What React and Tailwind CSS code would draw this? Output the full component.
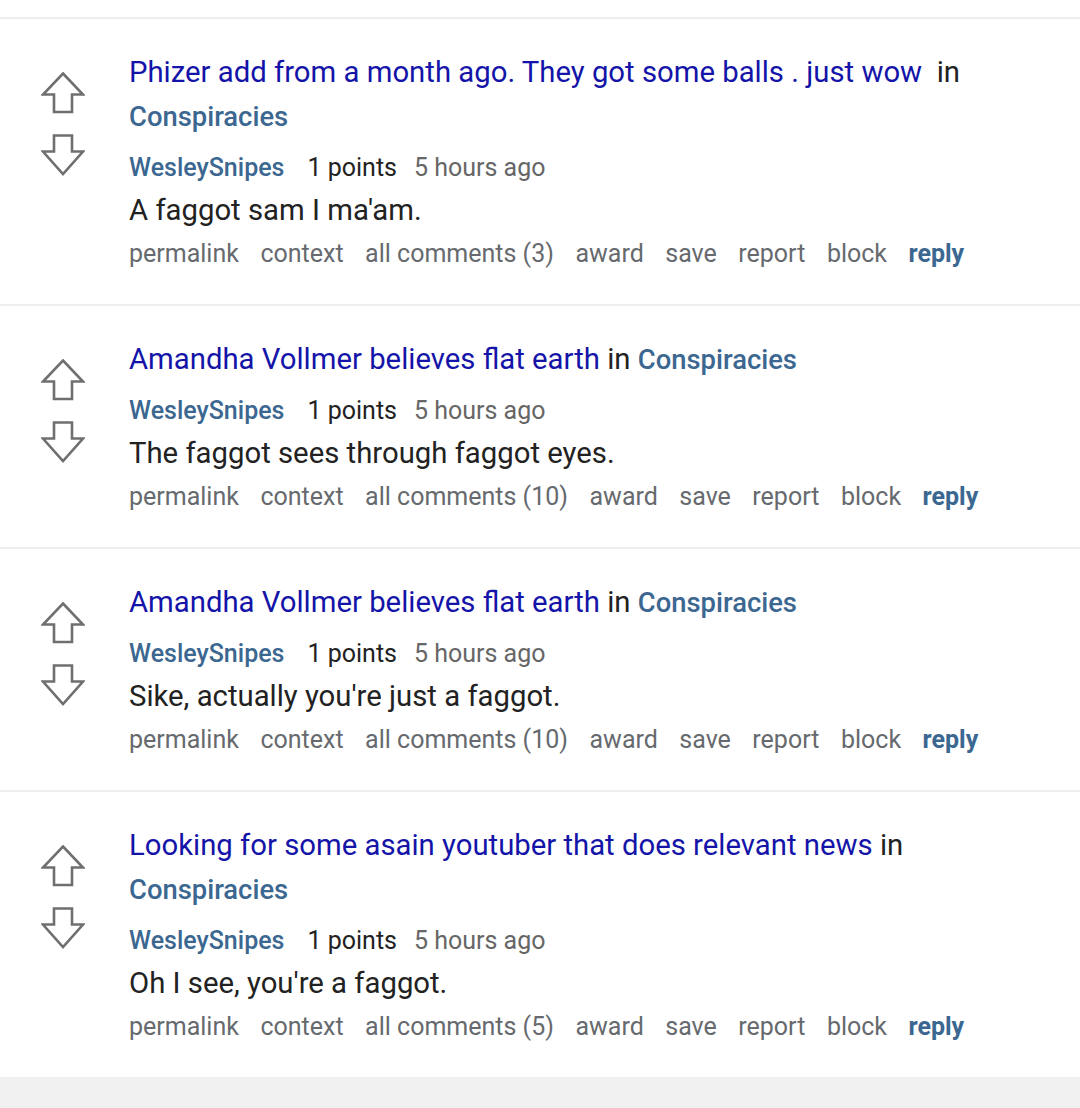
import React from "react";

const items = [
  {
    title: "Phizer add from a month ago. They got some balls . just wow\u00a0",
    body: "A faggot sam I ma'am.",
    count: 3,
  },
  {
    title: "Amandha Vollmer believes flat earth",
    body: "The faggot sees through faggot eyes.",
    count: 10,
  },
  {
    title: "Amandha Vollmer believes flat earth",
    body: "Sike, actually you're just a faggot.",
    count: 10,
  },
  {
    title: "Looking for some asain youtuber that does relevant news",
    body: "Oh I see, you're a faggot.",
    count: 5,
  },
];

function Arrow({ down }) {
  return (
    <svg width="44" height="42" viewBox="0 0 44 42" className="block">
      <path
        d={
          down
            ? "M13 1.5 L31 1.5 L31 17.5 L42 17.5 L22 40 L2 17.5 L13 17.5 Z"
            : "M22 1.5 L42 22.5 L31 22.5 L31 40 L13 40 L13 22.5 L2 22.5 Z"
        }
        fill="none"
        stroke="#6f6f6f"
        strokeWidth="2.6"
        strokeLinejoin="miter"
      />
    </svg>
  );
}

function Card({ item }) {
  return (
    <div className="flex border-t-2 border-[#eeeeee] bg-white">
      <div className="w-[125px] shrink-0 flex flex-col items-center pt-[53px] gap-[20px]">
        <Arrow />
        <Arrow down />
      </div>
      <div className="flex-1 pl-[4px] pt-[30.5px] pb-[29.5px] pr-[30px]">
        <div className="text-[29.3px] leading-[44px] mb-[7px]">
          <span className="text-[#1414a8]">{item.title}</span>{" "}
          <span className="text-[#222222]">in</span>{" "}
          <span className="text-[#3b6791] font-medium text-[27.4px]">Conspiracies</span>
        </div>
        <div className="text-[25px] leading-[43px] flex items-baseline">
          <span className="text-[#3b6791] font-medium mr-[23px]">WesleySnipes</span>
          <span className="text-[#222222] mr-[17px]">1 points</span>
          <span className="text-[#666666]">5 hours ago</span>
        </div>
        <div className="text-[29.3px] leading-[43px] text-[#222222]">{item.body}</div>
        <div className="text-[25px] leading-[43px] text-[#666a6e] flex items-baseline gap-[21.5px]">
          <span>permalink</span>
          <span>context</span>
          <span>all comments ({item.count})</span>
          <span>award</span>
          <span>save</span>
          <span>report</span>
          <span>block</span>
          <span className="text-[#3b6791] font-bold">reply</span>
        </div>
      </div>
    </div>
  );
}

export default function App() {
  return (
    <div
      className="w-[1080px] h-[1108px] bg-[#f0f0f0] flex flex-col"
      style={{ fontFamily: "Roboto, 'Noto Sans', sans-serif" }}
    >
      <div className="h-[17px] bg-white" />
      {items.map((it, i) => (
        <Card key={i} item={it} />
      ))}
    </div>
  );
}
